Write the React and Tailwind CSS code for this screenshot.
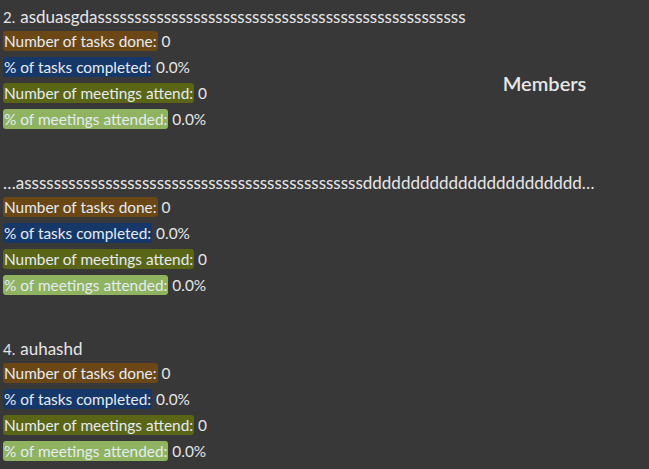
import React from 'react';

const members = [
    { num: '2.', name: 'asduasgda' + 's'.repeat(50) },
    { num: '', name: '…a' + 's'.repeat(46) + 'd'.repeat(23) + '…' },
    { num: '4.', name: 'auhashd' },
];

const StatRow = ({ label, value, color }) => (
    <div className="leading-[26px] whitespace-nowrap text-[15.4px]">
        <span className={`${color} rounded-[3px] px-[1px] py-[1px] text-[#e4ecf4]`}>{label}</span>{' '}
        <span className="text-[#e6e6e6]">{value}</span>
    </div>
);

const MemberCard = ({ member }) => (
    <div className="mb-[40px]">
        <div className="h-[22px] leading-[22px] whitespace-nowrap text-[#e6e6e6]">
            {member.num && <span className="text-[15px] mr-[5px]">{member.num}</span>}
            <span className="text-[17px]">{member.name}</span>
        </div>
        <StatRow label="Number of tasks done:" value="0" color="bg-[#6b4716]" />
        <StatRow label="% of tasks completed:" value="0.0%" color="bg-[#163869]" />
        <StatRow label="Number of meetings attend:" value="0" color="bg-[#5b6516]" />
        <StatRow label="% of meetings attended:" value="0.0%" color="bg-[#8fb35e]" />
    </div>
);

const App = () => {
    return (
        <div className="h-screen w-full bg-[#383838] flex overflow-hidden text-[16px]" style={{ fontFamily: 'Lato, "Noto Sans", sans-serif' }}>
            <div className="w-[440px] shrink-0 pl-[3px] pt-[6px]">
                {members.map((m, i) => (
                    <MemberCard key={i} member={m} />
                ))}
            </div>
            <div className="flex-1 text-center pt-[68px]">
                <h2 className="text-[20px] font-semibold text-[#e6e6e6]">Members</h2>
            </div>
        </div>
    );
};

export default App;
